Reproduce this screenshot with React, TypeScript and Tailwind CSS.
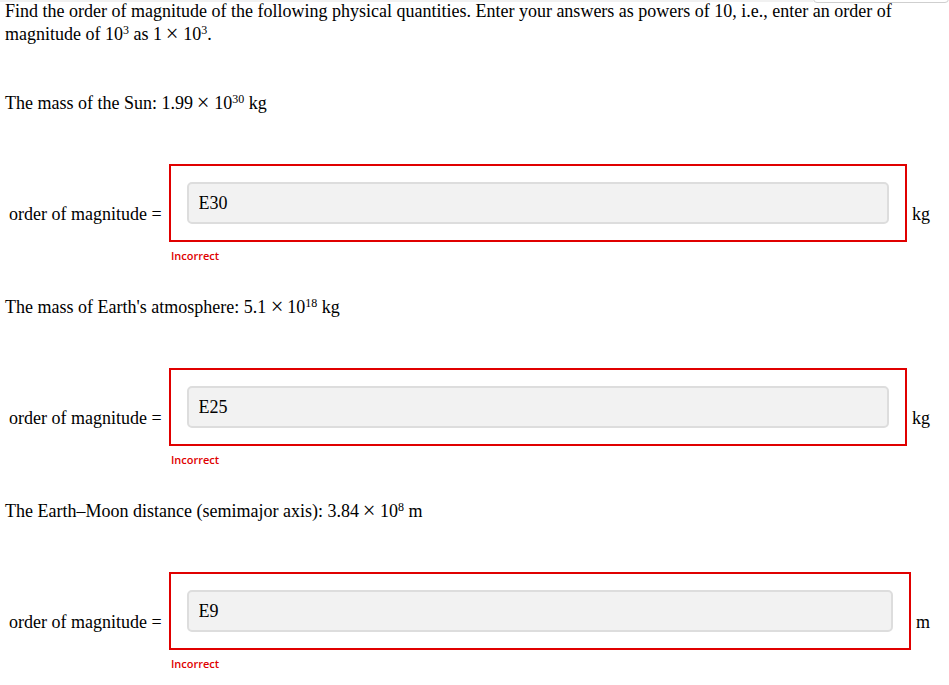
import React from "react";

const serif = "font-['Liberation_Serif','Times_New_Roman',serif]";

function Times() {
  return <span className="inline-block scale-125 mx-[1px]">×</span>;
}

function Sup({ children }: { children: React.ReactNode }) {
  return <sup className="text-[12px] top-[-6px]">{children}</sup>;
}

function Block({
  heading,
  value,
  unit,
}: {
  heading: React.ReactNode;
  value: string;
  unit: string;
}) {
  return (
    <div>
      <div className="leading-[23px] pl-[5px] whitespace-nowrap">{heading}</div>
      <div className="mt-[49px] flex items-end pr-[19px]">
        <div className="pl-[9px] leading-[23px] mb-[16px] whitespace-nowrap">order of magnitude =</div>
        <div className="ml-[7px] flex-1">
          <div className="border-2 border-[#e00000] p-[16px]">
            <input
              readOnly
              value={value}
              className={`${serif} w-full h-[42px] bg-[#f2f2f2] border-2 border-[#dddddd] rounded-[5px] px-[10px] text-[18px] text-black outline-none`}
            />
          </div>
        </div>
        <div className="ml-[5px] leading-[23px] mb-[16px]">{unit}</div>
      </div>
      <div className="pl-[171px] mt-[6px] font-['Open_Sans',sans-serif] font-semibold text-[11px] leading-[16px] text-[#e00000]">
        Incorrect
      </div>
    </div>
  );
}

export default function App() {
  return (
    <div className={`${serif} relative bg-white text-black text-[18px] w-[949px] h-[685px] overflow-hidden`}>
      <div className="absolute top-0 left-0 w-[813px] h-[2px] bg-[#f1f1f1]" />
      <div className="absolute top-[-12px] left-[813px] right-0 h-[15px] border border-[#cfcfcf] rounded-[4px] bg-white" />
      <div className="pl-[5px] leading-[23px] whitespace-nowrap">
        Find the order of magnitude of the following physical quantities. Enter your answers as powers of 10, i.e., enter an order of
        <br />
        magnitude of 10<Sup>3</Sup> as 1 <Times /> 10<Sup>3</Sup>.
      </div>
      <div className="mt-[46px] flex flex-col gap-[32px]">
        <Block
          heading={
            <>
              The mass of the Sun: 1.99 <Times /> 10<Sup>30</Sup> kg
            </>
          }
          value="E30"
          unit="kg"
        />
        <Block
          heading={
            <>
              The mass of Earth's atmosphere: 5.1 <Times /> 10<Sup>18</Sup> kg
            </>
          }
          value="E25"
          unit="kg"
        />
        <Block
          heading={
            <>
              The Earth–Moon distance (semimajor axis): 3.84 <Times /> 10<Sup>8</Sup> m
            </>
          }
          value="E9"
          unit="m"
        />
      </div>
    </div>
  );
}
